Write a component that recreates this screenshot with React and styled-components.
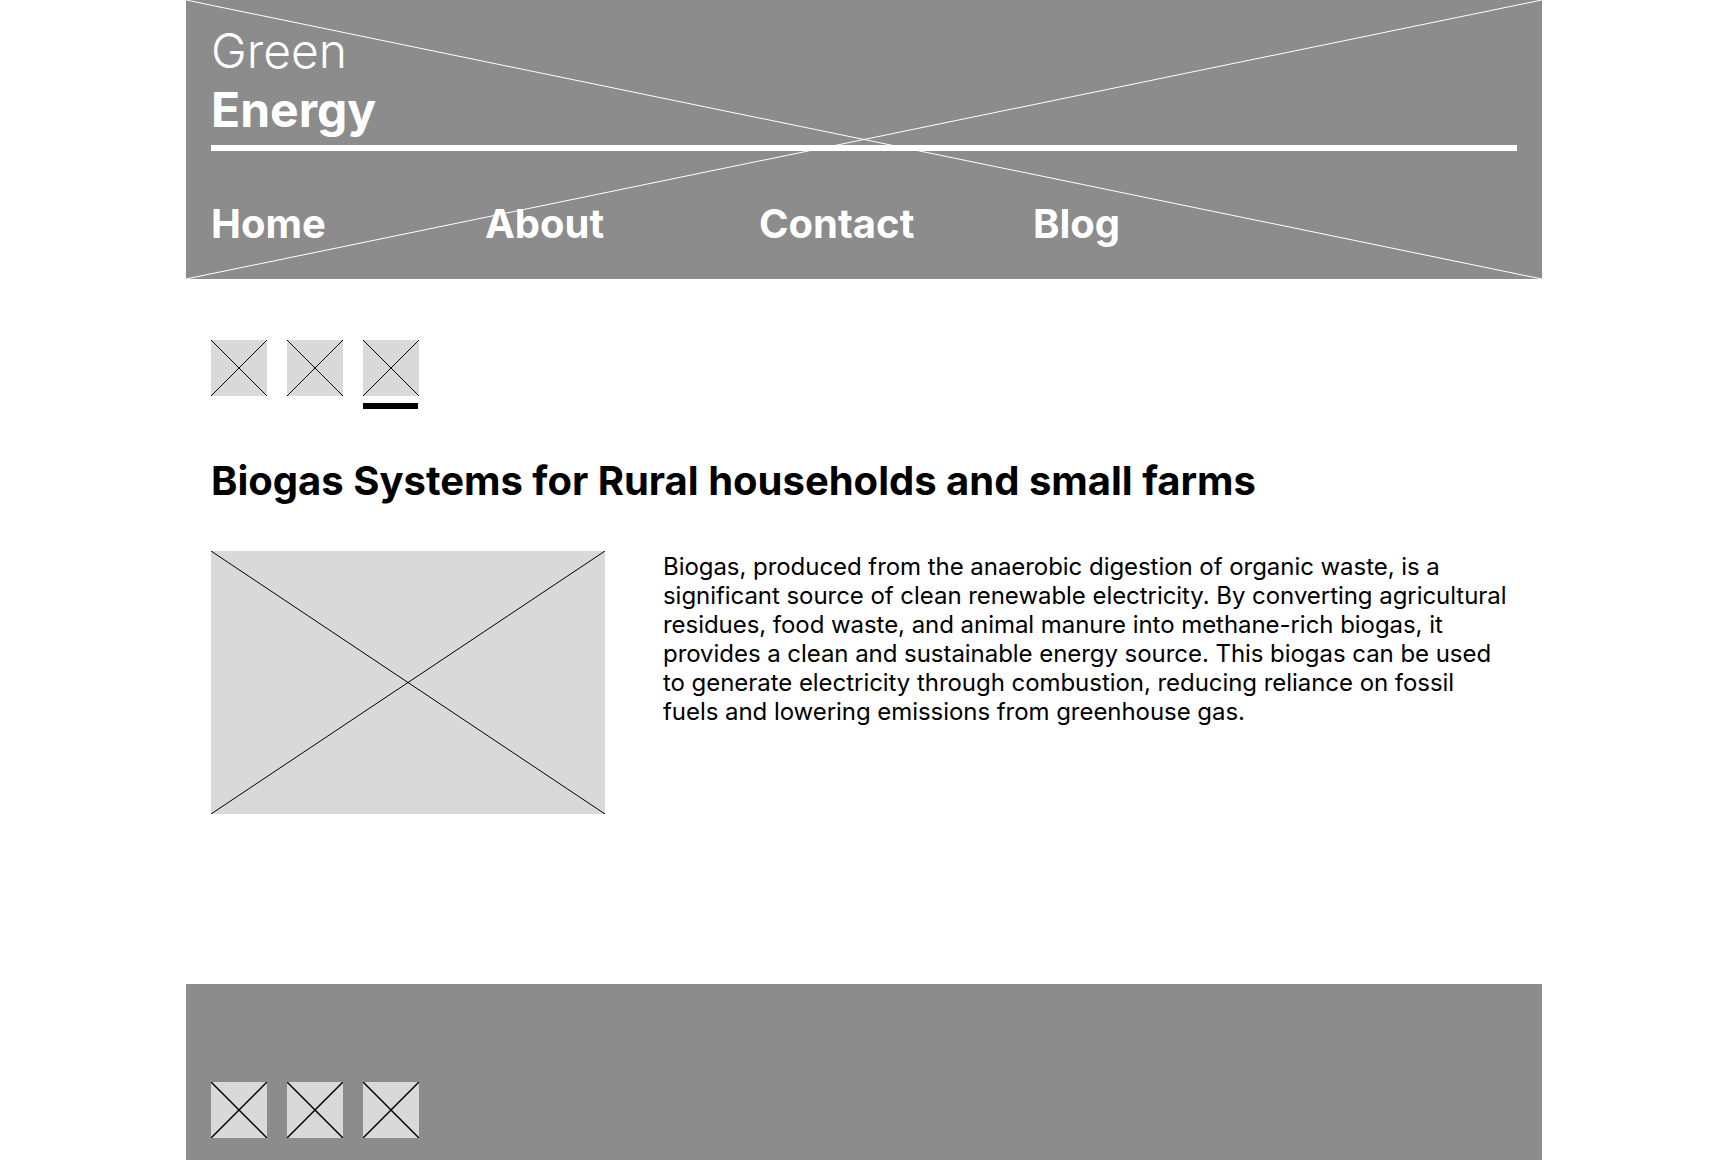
import React from "react";
import styled, { createGlobalStyle } from "styled-components";

const COLORS = {
  header: "#8c8c8c",
  placeholder: "#d9d9d9",
  white: "#ffffff",
  black: "#000000",
};

const GlobalStyle = createGlobalStyle`
  html, body {
    margin: 0;
    padding: 0;
    background: ${COLORS.white};
  }
  body {
    font-family: Inter, "Noto Sans", sans-serif;
  }
  * {
    box-sizing: border-box;
  }
`;

function Cross({ color = COLORS.black, weight = 1 }) {
  return (
    <CrossSvg viewBox="0 0 100 100" preserveAspectRatio="none">
      <line
        x1="0"
        y1="0"
        x2="100"
        y2="100"
        stroke={color}
        strokeWidth={weight}
        vectorEffect="non-scaling-stroke"
      />
      <line
        x1="0"
        y1="100"
        x2="100"
        y2="0"
        stroke={color}
        strokeWidth={weight}
        vectorEffect="non-scaling-stroke"
      />
    </CrossSvg>
  );
}

function Placeholder({ width, height, weight }) {
  return (
    <PlaceholderBox $width={width} $height={height}>
      <Cross weight={weight} />
    </PlaceholderBox>
  );
}

const navItems = ["Home", "About", "Contact", "Blog"];

function App() {
  return (
    <>
      <GlobalStyle />
      <Page>
        <Header>
          <Cross color={COLORS.white} />
          <HeaderInner>
            <Logo>
              <LogoLight>Green</LogoLight>
              <LogoBold>Energy</LogoBold>
            </Logo>
            <Divider />
            <Nav>
              {navItems.map((item) => (
                <NavLink key={item}>{item}</NavLink>
              ))}
            </Nav>
          </HeaderInner>
        </Header>

        <Main>
          <Thumbs>
            {[0, 1, 2].map((i) => (
              <Thumb key={i} $active={i === 2}>
                <Placeholder width={56} height={56} />
              </Thumb>
            ))}
          </Thumbs>

          <Title>Biogas Systems for Rural households and small farms</Title>

          <Content>
            <Placeholder width={394} height={263} />
            <Text>
              Biogas, produced from the anaerobic digestion of organic waste, is
              a significant source of clean renewable electricity. By converting
              agricultural residues, food waste, and animal manure into
              methane-rich biogas, it provides a clean and sustainable energy
              source. This biogas can be used to generate electricity through
              combustion, reducing reliance on fossil fuels and lowering
              emissions from greenhouse gas.
            </Text>
          </Content>
        </Main>

        <Footer>
          <Socials>
            {[0, 1, 2].map((i) => (
              <Placeholder key={i} width={56} height={56} weight={1.5} />
            ))}
          </Socials>
        </Footer>
      </Page>
    </>
  );
}

const Page = styled.div`
  width: 1356px;
  margin: 0 auto;
`;

const CrossSvg = styled.svg`
  position: absolute;
  inset: 0;
  width: 100%;
  height: 100%;
  display: block;
  pointer-events: none;
`;

const PlaceholderBox = styled.div`
  position: relative;
  flex-shrink: 0;
  width: ${(p) => p.$width}px;
  height: ${(p) => p.$height}px;
  background: ${COLORS.placeholder};
`;

const Header = styled.header`
  position: relative;
  height: 279px;
  background: ${COLORS.header};
  color: ${COLORS.white};
`;

const HeaderInner = styled.div`
  position: relative;
  padding: 21px 25px 0;
`;

const Logo = styled.div`
  display: flex;
  flex-direction: column;
  font-size: 48px;
  line-height: 59px;
`;

const LogoLight = styled.span`
  font-weight: 300;
`;

const LogoBold = styled.span`
  font-weight: 700;
`;

const Divider = styled.div`
  height: 6px;
  margin-top: 6px;
  background: ${COLORS.white};
`;

const Nav = styled.nav`
  display: grid;
  grid-template-columns: repeat(4, 250px);
  column-gap: 24px;
  margin-top: 49px;
`;

const NavLink = styled.a`
  font-size: 40px;
  line-height: 48px;
  font-weight: 700;
  color: ${COLORS.white};
  cursor: pointer;
`;

const Main = styled.main`
  padding: 61px 25px 0;
`;

const Thumbs = styled.div`
  display: flex;
  gap: 20px;
`;

const Thumb = styled.div`
  display: flex;
  flex-direction: column;
  gap: 7px;

  &::after {
    content: "";
    display: block;
    width: 55px;
    height: 6px;
    background: ${(p) => (p.$active ? COLORS.black : "transparent")};
  }
`;

const Title = styled.h1`
  margin: 48px 0 0;
  font-size: 40px;
  line-height: 48px;
  font-weight: 700;
  color: ${COLORS.black};
`;

const Content = styled.section`
  display: flex;
  align-items: flex-start;
  gap: 58px;
  margin-top: 46px;
`;

const Text = styled.p`
  margin: 1px 0 0;
  flex: 0 1 848px;
  font-size: 24px;
  line-height: 29px;
  font-weight: 400;
  letter-spacing: -0.05px;
  color: ${COLORS.black};
`;

const Footer = styled.footer`
  margin-top: 170px;
  padding: 98px 25px 80px;
  background: ${COLORS.header};
`;

const Socials = styled.div`
  display: flex;
  gap: 20px;
`;

export default App;
